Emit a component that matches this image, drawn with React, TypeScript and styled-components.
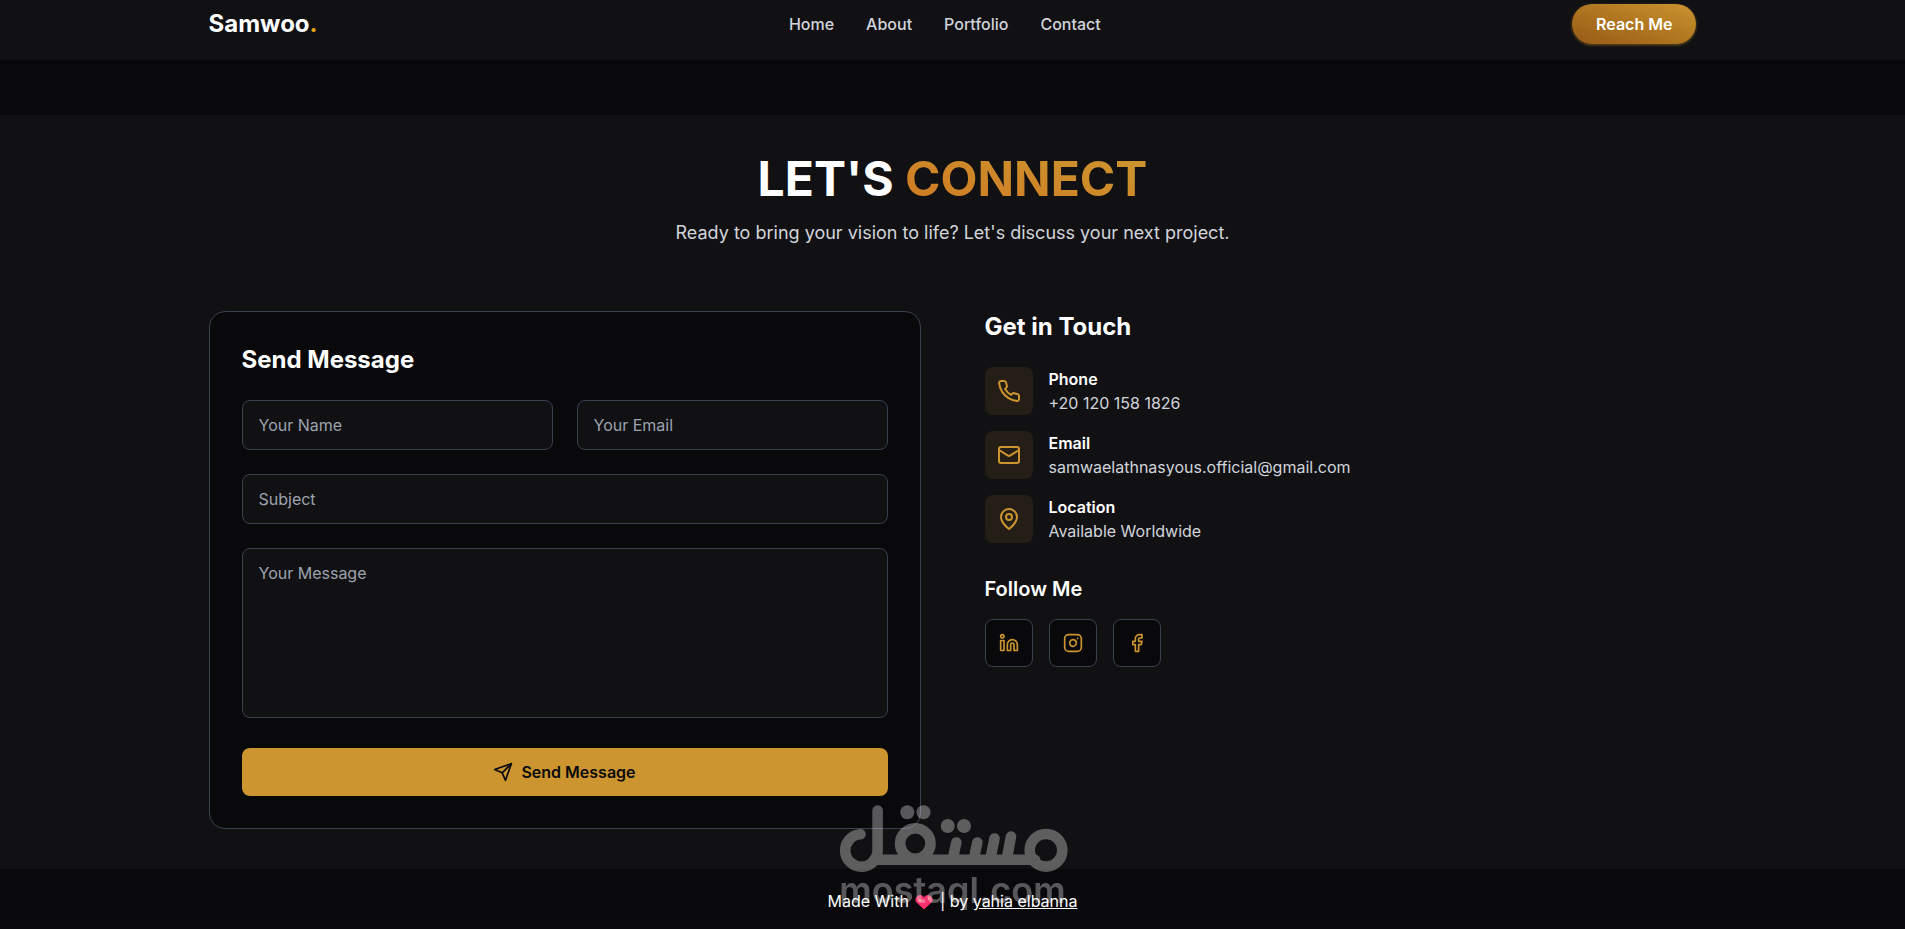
import React from "react";
import styled, { createGlobalStyle } from "styled-components";
import { Facebook, Instagram, Linkedin } from "lucide-react";

const GlobalStyle = createGlobalStyle`
  *, *::before, *::after { box-sizing: border-box; }
  body {
    margin: 0;
    background: #09090b;
    color: #fff;
    font-family: Inter, "Liberation Sans", sans-serif;
    font-size: 16px;
    line-height: 24px;
  }
  h1, h2, h3, p, ul { margin: 0; padding: 0; }
  a { color: inherit; text-decoration: none; }
  input, textarea, button { font: inherit; color: inherit; }
`;

const Container = styled.div`
  width: 100%;
  max-width: 1536px;
  margin: 0 auto;
  padding: 0 24px;
`;

const Header = styled.header`
  background: #111113;
  padding: 4px 0 16px;
`;

const HeaderRow = styled(Container)`
  display: flex;
  align-items: center;
  justify-content: space-between;
`;

const Brand = styled.a`
  font-size: 24px;
  line-height: 32px;
  font-weight: 700;
`;

const BrandDot = styled.span`
  color: #e5a50a;
`;

const Nav = styled.nav`
  display: flex;
  gap: 32px;
  color: #d1d5db;
  font-weight: 500;
`;

const ReachButton = styled.button`
  height: 40px;
  padding: 0 24px;
  border: 0;
  border-radius: 20px;
  background: linear-gradient(to top right, #975a16, #b07620 50%, #cc9430);
  box-shadow: 0 1px 3px rgba(204, 148, 48, 0.5);
  font-weight: 600;
  cursor: pointer;
`;

const Section = styled.section`
  margin-top: 55px;
  padding: 40px 0;
  background: #111113;
`;

const Intro = styled.div`
  margin-bottom: 64px;
  text-align: center;
`;

const Title = styled.h1`
  margin-bottom: 16px;
  font-size: 48px;
  line-height: 48px;
  font-weight: 700;
`;

const Accent = styled.span`
  background: linear-gradient(to top right, #d07a22, #cc9730);
  background-clip: text;
  -webkit-background-clip: text;
  color: transparent;
`;

const Subtitle = styled.p`
  color: #d1d5db;
  font-size: 18px;
  line-height: 28px;
`;

const Columns = styled.div`
  display: grid;
  grid-template-columns: 1fr 1fr;
  gap: 64px;
`;

const Card = styled.div`
  padding: 32px;
  border: 1px solid #374151;
  border-radius: 16px;
  background: #09090b;
`;

const Heading = styled.h2`
  margin-bottom: 24px;
  font-size: 24px;
  line-height: 32px;
  font-weight: 700;
`;

const Form = styled.form`
  display: grid;
  gap: 24px;
`;

const FieldPair = styled.div`
  display: grid;
  grid-template-columns: 1fr 1fr;
  gap: 24px;
`;

const Field = styled.input`
  width: 100%;
  height: 50px;
  padding: 12px 16px;
  border: 1px solid #374151;
  border-radius: 8px;
  outline: 0;
  background: #111113;
  &::placeholder { color: #9ca3af; opacity: 1; }
  &:focus { border-color: #cc9530; }
`;

const MessageField = styled(Field)`
  display: block;
  height: 170px;
  margin-bottom: 6px;
  resize: none;
`;

const SendButton = styled.button`
  display: flex;
  align-items: center;
  justify-content: center;
  gap: 8px;
  height: 48px;
  border: 0;
  border-radius: 8px;
  background: #cc9530;
  color: #09090b;
  font-weight: 600;
  cursor: pointer;
`;

const ContactList = styled.ul`
  display: grid;
  gap: 16px;
  margin-bottom: 32px;
  list-style: none;
`;

const ContactItem = styled.li`
  display: flex;
  align-items: center;
  gap: 16px;
`;

const IconTile = styled.span`
  display: flex;
  align-items: center;
  justify-content: center;
  width: 48px;
  height: 48px;
  border-radius: 8px;
  background: #241e16;
  color: #cc9530;
`;

const ContactLabel = styled.p`
  font-weight: 600;
`;

const ContactValue = styled.p`
  color: #d1d5db;
`;

const FollowHeading = styled.h3`
  margin-bottom: 16px;
  font-size: 20px;
  line-height: 28px;
  font-weight: 600;
`;

const Socials = styled.div`
  display: flex;
  gap: 16px;
`;

const SocialLink = styled.a`
  display: flex;
  align-items: center;
  justify-content: center;
  width: 48px;
  height: 48px;
  border: 1px solid #374151;
  border-radius: 8px;
  background: #09090b;
  color: #cc9530;
`;

const Footer = styled.footer`
  position: relative;
  padding: 20px 0 16px;
  text-align: center;
`;

const Credit = styled.a`
  text-decoration: underline;
`;

const HeartIcon = styled.svg`
  width: 22px;
  height: 16px;
  vertical-align: -3px;
`;

const Watermark = styled.div`
  position: absolute;
  left: 50%;
  bottom: 24px;
  transform: translateX(-50%);
  opacity: 0.32;
  pointer-events: none;
`;

const WatermarkLogo = styled.svg`
  display: block;
  width: 240px;
  height: 75px;
`;

const WatermarkText = styled.div`
  font-size: 36px;
  line-height: 30px;
  font-weight: 600;
`;

type StrokeIconProps = { size: number; children: React.ReactNode };

const StrokeIcon = ({ size, children }: StrokeIconProps) => (
  <svg width={size} height={size} viewBox="0 0 24 24" fill="none" stroke="currentColor"
    strokeWidth="2" strokeLinecap="round" strokeLinejoin="round" aria-hidden="true">
    {children}
  </svg>
);

const contacts = [
  {
    label: "Phone",
    value: "+20 120 158 1826",
    icon: <path d="M22 16.92v3a2 2 0 0 1-2.18 2 19.79 19.79 0 0 1-8.63-3.07 19.5 19.5 0 0 1-6-6 19.79 19.79 0 0 1-3.07-8.67A2 2 0 0 1 4.11 2h3a2 2 0 0 1 2 1.72 12.84 12.84 0 0 0 .7 2.81 2 2 0 0 1-.45 2.11L8.09 9.91a16 16 0 0 0 6 6l1.27-1.27a2 2 0 0 1 2.11-.45 12.84 12.84 0 0 0 2.81.7A2 2 0 0 1 22 16.92z" />,
  },
  {
    label: "Email",
    value: "samwaelathnasyous.official@gmail.com",
    icon: (
      <>
        <rect width="20" height="16" x="2" y="4" rx="2" />
        <path d="m22 7-8.97 5.7a1.94 1.94 0 0 1-2.06 0L2 7" />
      </>
    ),
  },
  {
    label: "Location",
    value: "Available Worldwide",
    icon: (
      <>
        <path d="M20 10c0 6-8 12-8 12s-8-6-8-12a8 8 0 0 1 16 0Z" />
        <circle cx="12" cy="10" r="3" />
      </>
    ),
  },
];

const links = ["Home", "About", "Portfolio", "Contact"];

export default function App() {
  return (
    <>
      <GlobalStyle />
      <Header>
        <HeaderRow>
          <Brand href="#home">Samwoo<BrandDot>.</BrandDot></Brand>
          <Nav>
            {links.map((link) => (
              <a key={link} href={`#${link.toLowerCase()}`}>{link}</a>
            ))}
          </Nav>
          <ReachButton type="button">Reach Me</ReachButton>
        </HeaderRow>
      </Header>

      <Section id="contact">
        <Container>
          <Intro>
            <Title>LET'S <Accent>CONNECT</Accent></Title>
            <Subtitle>Ready to bring your vision to life? Let's discuss your next project.</Subtitle>
          </Intro>
          <Columns>
            <Card>
              <Heading>Send Message</Heading>
              <Form onSubmit={(event) => event.preventDefault()}>
                <FieldPair>
                  <Field type="text" name="name" placeholder="Your Name" aria-label="Your Name" />
                  <Field type="email" name="email" placeholder="Your Email" aria-label="Your Email" />
                </FieldPair>
                <Field type="text" name="subject" placeholder="Subject" aria-label="Subject" />
                <MessageField as="textarea" name="message" placeholder="Your Message" aria-label="Your Message" />
                <SendButton type="submit">
                  <StrokeIcon size={20}>
                    <path d="m22 2-7 20-4-9-9-4Z" />
                    <path d="M22 2 11 13" />
                  </StrokeIcon>
                  Send Message
                </SendButton>
              </Form>
            </Card>
            <div>
              <Heading>Get in Touch</Heading>
              <ContactList>
                {contacts.map(({ label, value, icon }) => (
                  <ContactItem key={label}>
                    <IconTile><StrokeIcon size={24}>{icon}</StrokeIcon></IconTile>
                    <div>
                      <ContactLabel>{label}</ContactLabel>
                      <ContactValue>{value}</ContactValue>
                    </div>
                  </ContactItem>
                ))}
              </ContactList>
              <FollowHeading>Follow Me</FollowHeading>
              <Socials>
                <SocialLink href="#linkedin" aria-label="LinkedIn"><Linkedin size={20} /></SocialLink>
                <SocialLink href="#instagram" aria-label="Instagram"><Instagram size={20} /></SocialLink>
                <SocialLink href="#facebook" aria-label="Facebook"><Facebook size={20} /></SocialLink>
              </Socials>
            </div>
          </Columns>
        </Container>
      </Section>

      <Footer>
        <p>
          Made With{" "}
          <HeartIcon viewBox="0 0 22 16" role="img" aria-label="love">
            <path d="M11 15.500 3.800 8.700A4.400 4.400 0 0 1 3.700 2.700 4.300 4.300 0 0 1 11 3.200a4.300 4.300 0 0 1 7.300-.5 4.400 4.400 0 0 1-.1 6Z" fill="#f9306c" />
            <path d="m7 4.500.6 1.300 1.300.6-1.300.6L7 8.300 6.400 7l-1.300-.6 1.300-.6ZM15.800 2.800l.5 1.100 1.100.5-1.100.5-.5 1.100-.5-1.100-1.100-.5 1.100-.5Z" fill="#f59a5c" />
          </HeartIcon>{" "}
          | by <Credit href="#author">yahia elbanna</Credit>
        </p>
        <Watermark aria-hidden="true">
          <WatermarkLogo viewBox="0 0 240 75" fill="none" stroke="#fff" strokeWidth="10.600" strokeLinecap="round">
            <path d="M27.500 34.300A16.200 16.200 0 1 0 44.600 50V10.500M41 59.700H202M120 58l3.300-15.500M141 58l3.300-15.500M157.500 58l4-19.500M174 58l4-21.500" />
            <circle cx="82.300" cy="43.500" r="15.200" />
            <circle cx="213" cy="50.300" r="16.300" />
            <g fill="#fff" stroke="none">
              <circle cx="74.300" cy="12.300" r="7" /><circle cx="90.500" cy="12.300" r="7" />
              <circle cx="114.700" cy="26" r="7" /><circle cx="131" cy="26" r="7" />
            </g>
          </WatermarkLogo>
          <WatermarkText>mostaql.com</WatermarkText>
        </Watermark>
      </Footer>
    </>
  );
}
